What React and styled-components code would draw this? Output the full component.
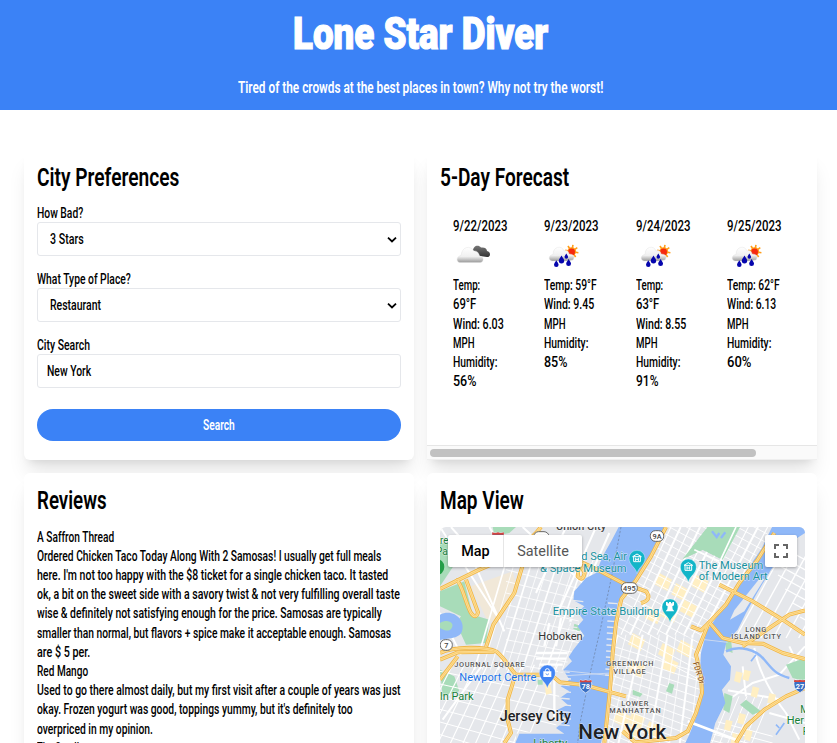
import React, { useLayoutEffect, useRef, useState } from "react";
import styled, { createGlobalStyle } from "styled-components";

const GlobalStyle = createGlobalStyle`
  * { box-sizing: border-box; }
  html, body { margin: 0; padding: 0; background: #fff; overflow: hidden; }
  body { font-family: Roboto, "Liberation Sans", sans-serif; font-size: 14.4px; font-weight: 500; color: #000; }
  h1, h2, p { margin: 0; font-weight: inherit; }
`;

const FitBox = styled.span`
  display: block;
  flex: none;
  width: ${(p) => p.$w}px;
  white-space: pre;
`;

const FitInner = styled.span`
  display: inline-block;
  transform-origin: 0 50%;
`;

/* Condenses a single line of text to the given width. */
function Fit({ w, children }) {
  const ref = useRef(null);
  const [scale, setScale] = useState(1);
  useLayoutEffect(() => {
    setScale(w / ref.current.offsetWidth);
  }, [w]);
  return (
    <FitBox $w={w}>
      <FitInner ref={ref} style={{ transform: `scaleX(${scale})` }}>
        {children}
      </FitInner>
    </FitBox>
  );
}

const Page = styled.div`
  height: 743px;
  overflow: hidden;
`;

const Header = styled.header`
  height: 110px;
  padding-left: 4px;
  background: #3b82f6;
  color: #fff;
  display: flex;
  flex-direction: column;
  align-items: center;
`;

const Title = styled.h1`
  padding-top: 9px;
  font-size: 43.5px;
  line-height: 52px;
  font-weight: 900;
  -webkit-text-stroke: 1.2px #fff;
`;

const Tagline = styled.p`
  padding-top: 17px;
  font-size: 16px;
  line-height: 20px;
  font-weight: 600;
`;

const Grid = styled.main`
  display: grid;
  grid-template-columns: 390px 390px;
  grid-template-rows: 310px 400px;
  gap: 13px;
  padding: 40px 0 0 24px;
`;

const Card = styled.section`
  display: flex;
  flex-direction: column;
  padding: 12px 13px 0;
  background: #fff;
  border-radius: ${(p) => (p.$square ? "6px 6px 0 0" : "6px")};
  box-shadow: 0 16px 20px -4px rgba(0, 0, 0, 0.1), 0 6px 8px -5px rgba(0, 0, 0, 0.1);
`;

const Heading = styled.h2`
  height: 32px;
  font-size: 26.5px;
  line-height: 30px;
  font-weight: 600;
`;

const Label = styled.label`
  display: block;
  height: 19px;
  line-height: 21px;
  margin-top: ${(p) => (p.$first ? 9 : 13)}px;
`;

const Control = styled.div`
  height: 34px;
  border: 1px solid #e5e7eb;
  border-radius: 3px;
  padding: 1px 3px 0 ${(p) => (p.$select ? 12 : 9)}px;
  display: flex;
  align-items: center;
  justify-content: space-between;
`;

const SearchButton = styled.button`
  margin-top: 21px;
  height: 32px;
  border: 0;
  border-radius: 16px;
  background: #3b82f6;
  color: #fff;
  font: 600 14px Roboto, sans-serif;
  display: flex;
  align-items: center;
  justify-content: center;
`;

const Days = styled.div`
  display: flex;
  gap: 12.5px;
  padding: 23px 0 0 12.5px;
  height: 251px;
`;

const Day = styled.div`
  width: 79px;
  flex: none;
  line-height: 19.2px;
`;

const DayIcon = styled.svg`
  display: block;
  width: 40px;
  height: 40px;
`;

const ScrollTrack = styled.div`
  margin: 0 -13px;
  height: 15px;
  flex: none;
  border-top: 1px solid #e6e6e6;
  border-bottom: 1px solid #efefef;
  background: #fafafa;
  padding: 3px;
`;

const ScrollThumb = styled.div`
  width: 326px;
  height: 8px;
  border-radius: 4px;
  background: #c1c1c1;
`;

const ReviewList = styled.div`
  padding-top: 10.600px;
  line-height: 19.2px;
`;

const MapFrame = styled.div`
  position: relative;
  margin-top: 10px;
  width: 365px;
  height: 216px;
  border-radius: 6px 6px 0 0;
  overflow: hidden;
`;

const MapSvg = styled.svg`
  display: block;
  width: 365px;
  height: 216px;
`;

const MapTypes = styled.div`
  position: absolute;
  left: 8px;
  top: 8px;
  display: flex;
  height: 32px;
  background: #fff;
  border-radius: 2px;
  box-shadow: 0 1px 3px rgba(0, 0, 0, 0.3);
`;

const MapType = styled.div`
  width: ${(p) => (p.$active ? 55 : 79)}px;
  display: flex;
  align-items: center;
  justify-content: center;
  font-size: 14.4px;
  font-weight: ${(p) => (p.$active ? 500 : 400)};
  color: ${(p) => (p.$active ? "#000" : "#565656")};
  border-left: ${(p) => (p.$active ? "0" : "1px solid #e6e6e6")};
`;

const Fullscreen = styled.div`
  position: absolute;
  right: 8px;
  top: 8px;
  width: 32px;
  height: 32px;
  background: #fff;
  border-radius: 2px;
  box-shadow: 0 1px 3px rgba(0, 0, 0, 0.3);
  display: flex;
  align-items: center;
  justify-content: center;
`;

const HiddenDefs = styled.svg`
  display: block;
  width: 0;
  height: 0;
`;

const Chevron = () => (
  <svg width="10" height="8" viewBox="0 0 10 8">
    <path d="M1 1.600 L5 5.400 L9 1.600" fill="none" stroke="#000" strokeWidth="1.800" />
  </svg>
);

const WeatherDefs = () => (
  <HiddenDefs>
    <defs>
      <linearGradient id="cloudFill" x1="0" y1="0" x2="0" y2="1">
        <stop offset="0" stopColor="#fff" />
        <stop offset=".6" stopColor="#f0f0f0" />
        <stop offset="1" stopColor="#999" />
      </linearGradient>
      <linearGradient id="darkFill" x1="0" y1="0" x2="0" y2="1">
        <stop offset="0" stopColor="#777" />
        <stop offset="1" stopColor="#333" />
      </linearGradient>
    </defs>
  </HiddenDefs>
);

const Cloudy = () => (
  <DayIcon viewBox="0 0 40 40">
    <path d="M20 17 C19 10 25 8 28 11.500 C32 11 34 13 34 15 C38 16 38 21 34 21 L27 20 Z" fill="url(#darkFill)" />
    <path d="M7 26.500 C3 26 3 20.500 8 19.500 C9 10.500 17 9 21 15 C24 14.500 26 17 26.500 20 C31.500 21 31 26 27 26.500 Z" fill="url(#cloudFill)" stroke="#ddd" strokeWidth=".4" />
  </DayIcon>
);

const Drop = ({ x, y, s = 1 }) => (
  <path transform={`translate(${x} ${y}) scale(${s})`} d="M0 -4 C1 -2 2.700 -.4 2.700 1.200 A2.700 2.700 0 0 1 -2.700 1.200 C-2.700 -.4 -1 -2 0 -4Z" fill="#0505ad" />
);

const Rainy = () => (
  <DayIcon viewBox="0 0 40 40">
    <g stroke="#ff9d19" strokeWidth="1.600">
      {[0, 45, 90, 135, 180, 225, 270, 315].map((a) => (
        <path key={a} d="M27.800 8.800 V13" transform={`rotate(${a + 10} 27.800 15.500)`} />
      ))}
    </g>
    <circle cx="27.800" cy="15.500" r="4.300" fill="#ff9d19" />
    <circle cx="27.600" cy="16" r="3.400" fill="#f52a10" />
    <path d="M8 25 C4 24 4.500 19 9 18.500 C9 10 18 9 20 15 C23 13.500 25 16 25 18 C30 18 31 21 29 24 L22 25 Z" fill="url(#cloudFill)" stroke="#ddd" strokeWidth=".4" />
    <Drop x={17.5} y={23.5} />
    <Drop x={22.3} y={20.2} s={0.65} />
    <Drop x={12.3} y={27.7} s={0.85} />
    <Drop x={24.6} y={26.6} s={0.9} />
  </DayIcon>
);

const days = [
  { date: "9/22/2023", icon: Cloudy, lines: [["Temp:", 27], ["69°F", 23.5], ["Wind: 6.03", 50.5], ["MPH", 21.5], ["Humidity:", 44.5], ["56%", 23.5]] },
  { date: "9/23/2023", icon: Rainy, lines: [["Temp: 59°F", 53], ["Wind: 9.45", 50], ["MPH", 21.5], ["Humidity:", 44.5], ["85%", 23.5]] },
  { date: "9/24/2023", icon: Rainy, lines: [["Temp:", 27], ["63°F", 23.5], ["Wind: 8.55", 50], ["MPH", 21.5], ["Humidity:", 44.5], ["91%", 22.5]] },
  { date: "9/25/2023", icon: Rainy, lines: [["Temp: 62°F", 53], ["Wind: 6.13", 49], ["MPH", 21.5], ["Humidity:", 44.5], ["60%", 24.5]] },
];

const reviews = [
  ["A Saffron Thread", 77],
  ["Ordered Chicken Taco Today Along With 2 Samosas! I usually get full meals", 344.5],
  ["here. I'm not too happy with the $8 ticket for a single chicken taco. It tasted", 351.5],
  ["ok, a bit on the sweet side with a savory twist & not very fulfilling overall taste", 363],
  ["wise & definitely not satisfying enough for the price. Samosas are typically", 344.5],
  ["smaller than normal, but flavors + spice make it acceptable enough. Samosas", 354.5],
  ["are $ 5 per.", 53],
  ["Red Mango", 51],
  ["Used to go there almost daily, but my first visit after a couple of years was just", 363.5],
  ["okay. Frozen yogurt was good, toppings yummy, but it's definitely too", 315.5],
  ["overpriced in my opinion.", 116],
  ["The Smalls", 47],
];

const range = (n) => Array.from({ length: n }, (_, i) => i);

const HUDSON = "M548 12 L528 50 L500 100 L480 150 L450 165 L415 205 L412 232 L445 250 L425 268 L442 290 L425 310 L445 338 L412 380 L398 402 L408 415 L382 440 L400 470 L374 490 L400 505 L372 525 L395 545 L365 560 L390 590 L360 615 L385 632 L250 632 L238 660 H495 L515 560 L523 440 L535 330 L545 240 L600 170 L692 12Z";
const EAST = "M1008 12 L978 75 L920 160 L880 220 L840 285 L812 325 L795 390 L792 440 L804 500 L785 570 L762 630 L748 660 H822 L838 600 L868 540 L858 500 L882 470 L885 430 L862 395 L872 355 L905 320 L930 270 L960 215 L1005 140 L1060 60 L1107 30 V12Z";
const MANHATTAN = "M692 12 H1008 L978 75 L880 220 L812 325 L795 390 L804 500 L762 630 L748 660 H495 L515 560 L535 330 L545 240 L600 170Z";
const HIGHWAYS = [
  "M690 12 L645 100 L598 175 L556 228 L540 300 L530 390 L522 500 L505 660",
  "M12 198 L130 140 L235 95 L300 30 L315 12",
  "M315 25 L262 120 L235 210 L172 305 L150 372",
  "M12 390 C50 370 150 370 182 386 C210 410 225 440 240 455 L345 455 L372 478 L445 486 L540 512 L570 520",
  "M12 410 L65 388 L175 386",
  "M240 450 L215 530 L215 590 L225 630 L205 660",
  "M60 172 C75 172 90 245 105 270 Q120 290 126 268 L90 170",
  "M12 470 L65 400",
  "M400 100 L480 138 L560 180 L630 205 Q650 230 615 240",
  "M430 120 L425 160 Q440 178 446 150 L430 120",
  "M1015 30 L965 110 L910 180 L870 245 L818 300 L800 345 L780 395 L795 460 L798 510 L780 570 L755 625 L720 645 L600 658",
  "M850 185 L950 235 L1040 290 L1107 335",
  "M765 310 L795 322 L820 298 L860 345 L920 360 L980 362 L1040 390 L1107 408",
  "M920 370 L985 325 L1060 275 L1107 262",
  "M1107 495 L1050 520 L985 560 L930 610 L900 660",
  "M560 625 L600 660",
];
const PARKS = [
  "M815 12 H912 L860 110 L800 80 L740 108Z",
  "M12 60 H45 L55 125 L12 190Z",
  "M12 205 L85 175 L110 275 L160 290 L150 360 L90 365 L60 300 L75 280 L12 250Z",
  "M12 440 L55 460 L70 505 L20 520Z",
  "M170 12 H240 L220 30 L175 38Z",
  "M865 510 L890 520 L880 570 L862 560Z",
  "M912 545 L930 530 L975 565 L950 575Z",
  "M1050 425 L1107 405 V475 L1070 465Z",
  "M868 355 L885 350 L890 390 L870 382Z",
  "M1040 12 L1075 12 L1060 35Z",
  "M700 480 L715 485 L708 512 L690 505Z",
  "M590 500 L620 512 L612 522 L590 515Z",
  "M415 302 L440 312 L430 325 L412 318Z",
  "M305 470 H320 V485 H305Z",
  "M290 650 L375 640 V660 H290Z",
];

const Pin = ({ x, y, color, children }) => (
  <g transform={`translate(${x} ${y})`}>
    <path d="M0 46 C-3 28 -24 20 -24 0 A24 24 0 0 1 24 0 C24 20 3 28 0 46Z" fill={color} stroke="#fff" strokeOpacity=".5" strokeWidth="2" />
    {children}
  </g>
);

const MuseumGlyph = () => (
  <g fill="none" stroke="#fff" strokeWidth="3">
    <path d="M-13 -5 L0 -13 L13 -5Z M-10 -4 V10 H10 V-4 M-4 -2 V8 M4 -2 V8 M-4 3 H4" />
  </g>
);

const Shield = ({ x, y, w, children }) => (
  <g>
    <rect x={x - w / 2} y={y - 16} width={w} height="32" rx="15" fill="#fff" stroke="#666" strokeWidth="3" />
    <text x={x} y={y + 8} textAnchor="middle" fontSize="22" fontWeight="500" fill="#444">{children}</text>
  </g>
);

const Interstate = ({ x, y, children }) => (
  <g transform={`translate(${x} ${y})`}>
    <path d="M-16 -18 Q-8 -14 0 -18 Q8 -14 16 -18 Q25 8 0 21 Q-25 8 -16 -18Z" fill="#3a6fc4" stroke="#fff" strokeWidth="2" />
    <path d="M-17 -18 Q-8 -14 0 -18 Q8 -14 17 -18 L18 -11 H-18Z" fill="#d9453d" />
    <text y="10" textAnchor="middle" fontSize="22" fontWeight="700" fill="#fff">{children}</text>
  </g>
);

const labels = [
  ["Union City", 360, 20, 150, 30, "#444", 500],
  ["d Sea, Air", 436, 112, 137, 32, "#17919f", 400],
  ["& Space Museum", 312, 147, 260, 32, "#17919f", 400],
  ["The Museum", 788, 138, 194, 32, "#17919f", 400],
  ["of Modern Art", 788, 171, 207, 32, "#17919f", 400],
  ["Empire State Building", 350, 276, 320, 33, "#17919f", 400],
  ["Hoboken", 307, 350, 133, 34, "#333", 400],
  ["Newport Centre", 70, 473, 231, 33, "#1a73e8", 400],
  ["JOURNAL SQUARE", 55, 433, 211, 22, "#555", 500],
  ["GREENWICH", 511, 430, 141, 22, "#555", 500],
  ["VILLAGE", 532, 452, 97, 22, "#555", 500],
  ["LOWER", 556, 548, 81, 22, "#555", 500],
  ["MANHATTAN", 520, 570, 154, 22, "#555", 500],
  ["LONG", 928, 327, 63, 22, "#555", 500],
  ["ISLAND CITY", 886, 348, 149, 22, "#555", 500],
  ["Jersey City", 191, 594, 214, 43, "#202124", 500],
  ["New York", 427, 649, 264, 63, "#202124", 500],
  ["ln Park", 12, 530, 101, 33, "#188038", 400],
  ["re", 12, 63, 25, 31, "#188038", 400],
  ["Par", 0, 95, 46, 31, "#188038", 400],
  ["M", 1093, 570, 26, 31, "#188038", 400],
  ["Her", 1052, 602, 52, 31, "#188038", 400],
  ["P", 1100, 637, 18, 31, "#188038", 400],
  ["Liberty", 292, 673, 102, 33, "#188038", 400],
];

function CityMap() {
  return (
    <MapSvg viewBox="12 12 1095 648" fontFamily="Roboto, sans-serif">
      <defs>
        <clipPath id="manhattan"><path d={MANHATTAN} /></clipPath>
        <clipPath id="jersey"><path d="M12 12 H548 L480 150 L412 232 L440 338 L382 440 L374 490 L365 560 L360 620 L240 632 V660 H12Z" /></clipPath>
        <clipPath id="queens"><path d="M1107 30 L1060 60 L960 215 L870 360 L882 470 L868 540 L822 660 H1107Z" /></clipPath>
      </defs>
      <path d="M0 0 H1110 V670 H0Z" fill="#e5e7eb" />
      <path d="M105 190 L230 145 L245 205 L175 300 L150 285Z" fill="#f1e8d8" />
      {PARKS.slice(0, 5).map((d) => <path key={d} d={d} fill="#a8dcb9" />)}
      <g clipPath="url(#jersey)" stroke="#fff" fill="none">
        {range(15).map((i) => <path key={i} d={`M${215 + i * 26} 100 L${115 + i * 24} 440`} strokeWidth={i % 3 ? 2.5 : 5} />)}
        {range(9).map((i) => <path key={i} d={`M210 ${140 + i * 35} L460 ${205 + i * 32}`} strokeWidth="2.500" />)}
        {range(10).map((i) => <path key={i} d={`M${50 + i * 35} 425 L${-80 + i * 38} 680`} strokeWidth="3.500" />)}
        {range(7).map((i) => <path key={i} d={`M12 ${445 + i * 38} L370 ${520 + i * 44}`} strokeWidth="3" />)}
        <path d="M110 110 L205 325 M12 12 L190 290 M45 12 L150 130 M160 12 L230 130 M260 12 L440 180 M390 12 L300 210 M480 12 L370 260 M520 30 L400 300 M12 270 L75 395 M140 425 L20 590" strokeWidth="6" />
        <path d="M300 390 H395 M300 407 H390 M310 425 H380 M355 440 V590 M325 370 L340 300 M360 370 L375 285" strokeWidth="7" />
      </g>
      <g clipPath="url(#manhattan)" fill="none">
        {[[670, 150], [720, 180], [780, 155], [690, 245], [745, 230], [640, 250], [590, 330], [680, 360], [590, 410], [735, 350], [545, 560], [590, 565], [640, 595], [690, 400], [570, 600]].map(([x, y], i) => (
          <path key={i} d={`M${x} ${y} l38 20 l-14 34 l-38 -20Z`} fill="#ffefc3" />
        ))}
        <g stroke="#fff" strokeWidth="2.800">
          {range(25).map((i) => <path key={i} d={`M${530 + i * 8} ${330 - i * 23} l350 188`} />)}
          {range(12).map((i) => <path key={i} d={`M${705 + i * 29} 12 L${555 + i * 27} 335`} strokeWidth={i % 2 ? 6 : 3.5} />)}
          {range(14).map((i) => <path key={i} d={`M515 ${365 + i * 22} l310 ${95 + i * 3}`} />)}
          {range(12).map((i) => <path key={i} d={`M${545 + i * 25} 335 L${450 + i * 31} 680`} strokeWidth={i % 3 ? 2.5 : 6} />)}
        </g>
        <path d={PARKS[0]} fill="#a8dcb9" />
        <path d="M828 25 L842 42 L850 30 M855 45 L868 28" stroke="#8fb8f8" strokeWidth="7" />
        <path d="M900 12 L853 112 M775 80 L850 115" stroke="#fff" strokeWidth="5" />
      </g>
      <g clipPath="url(#queens)" stroke="#fff" fill="none">
        {range(10).map((i) => <path key={i} d={`M${960 + i * 22} ${30 + i * 42} l220 120`} strokeWidth="3.500" />)}
        {range(8).map((i) => <path key={i} d={`M${1000 + i * 38} 90 L${860 + i * 38} 345`} strokeWidth="4" />)}
        {range(6).map((i) => <path key={i} d={`M820 ${590 + i * 20} l190 50`} strokeWidth="3" />)}
        {range(6).map((i) => <path key={i} d={`M${885 + i * 24} 520 l-70 170`} strokeWidth="3" />)}
        <path d="M955 375 C965 440 1010 520 1050 570 L1090 650 M885 525 L950 480 L1030 455 L1107 370 M930 520 L920 430 M865 500 L1040 530 M1107 600 L1000 570 M1060 370 L1107 470" strokeWidth="6" />
      </g>
      {[[900, 445], [925, 440], [950, 490], [870, 590], [910, 570], [930, 620], [890, 630], [1000, 510]].map(([x, y]) => (
        <path key={`${x}-${y}`} d={`M${x} ${y} l20 5 l-8 30 l-18 -6Z`} fill="#ffefc3" />
      ))}
      {PARKS.slice(5).map((d) => <path key={d} d={d} fill="#a8dcb9" />)}
      <path d={HUDSON} fill="#8fb8f8" />
      <path d={EAST} fill="#8fb8f8" />
      <path d="M12 275 C50 255 90 290 78 325 C70 350 30 345 12 352Z" fill="#8fb8f8" />
      <path d="M12 300 C35 285 60 300 45 318 C35 330 12 315 12 315Z" fill="#a8dcb9" />
      <path d="M972 165 L985 168 L925 265 L882 290 L895 262Z" fill="#e7e9ed" />
      <path d="M870 385 C910 365 960 380 985 410 C1010 440 1020 455 1060 465" fill="none" stroke="#8fb8f8" strokeWidth="7" />
      <path d="M1020 635 L1045 600 M1030 615 L1020 605 M960 395 L945 415" fill="none" stroke="#8fb8f8" strokeWidth="5" />
      <g stroke="#e7e9ed" strokeWidth="4">
        {range(8).map((i) => <path key={i} d={`M${410 - i * 3} ${232 + i * 13} l32 4`} />)}
        {range(9).map((i) => <path key={i} d={`M${366 + (i % 2) * 4} ${445 + i * 20} l35 3`} />)}
        {range(13).map((i) => <path key={i} d={`M${516 - i * 0.7} ${240 + i * 18} l28 2`} />)}
      </g>
      <path d="M555 12 L525 170 L495 310 L465 440 L432 600 L425 660" fill="none" stroke="#6b7f9f" strokeWidth="2" strokeDasharray="7 5" />
      <path d="M385 443 L525 458 M390 458 L525 450 M720 340 L875 358 M740 595 L890 640" stroke="#e3e7ef" strokeWidth="3" opacity=".7" />
      <path d="M755 595 L900 650" stroke="#fff" strokeWidth="8" />
      <g fill="none" strokeLinejoin="round">
        {HIGHWAYS.map((d) => <path key={d} d={d} stroke="#f0b545" strokeWidth="12" />)}
        {HIGHWAYS.map((d) => <path key={d} d={d} stroke="#ffe19a" strokeWidth="7" />)}
        {HIGHWAYS.map((d) => <path key={d} d={d} stroke="#f3bf58" strokeWidth="1.800" />)}
      </g>
      <path d="M325 480 L340 475 L348 510 L330 515Z" fill="#ffefc3" />
      <g stroke="#fff" strokeWidth="3" strokeOpacity=".65" strokeLinejoin="round" paintOrder="stroke">
        {labels.map(([t, x, y, w, size, fill, weight]) => (
          <text key={`${t}${y}`} x={x} y={y} textLength={w} lengthAdjust={size < 24 ? "spacing" : "spacingAndGlyphs"} fontSize={size} fill={fill} fontWeight={weight}>{t}</text>
        ))}
        <text transform="translate(770 420) rotate(72)" textLength="68" lengthAdjust="spacingAndGlyphs" fontSize="25" fill="#925b21" fontWeight="500">FDR Dr</text>
      </g>
      <Shield x={663} y={39} w={40}>9A</Shield>
      <Shield x={580} y={195} w={48}>495</Shield>
      <Shield x={31} y={366} w={36}>7</Shield>
      <Shield x={316} y={42} w={46}>495</Shield>
      <Interstate x={449} y={489}>78</Interstate>
      <Interstate x={1092} y={488}>27</Interstate>
      <Interstate x={186} y={46} />
      <circle cx="0" cy="132" r="25" fill="#249e48" />
      <Pin x={603} y={106} color="#12b5c8"><MuseumGlyph /></Pin>
      <Pin x={757} y={132} color="#12b5c8"><MuseumGlyph /></Pin>
      <Pin x={702} y={252} color="#12b5c8">
        <path d="M-12 -15 H-7 V-11 H-3 V-15 H3 V-11 H7 V-15 H12 V-5 L7 -2 L8 7 L13 13 H-13 L-8 7 L-7 -2 L-12 -5Z" fill="#fff" />
      </Pin>
      <Pin x={334} y={450} color="#4285f4">
        <path d="M-12 -5 H12 V12 H-12Z" fill="#fff" />
        <path d="M-6 -4 V-7 A6 6 0 0 1 6 -7 V-4" fill="none" stroke="#fff" strokeWidth="3" />
        <path d="M-5 2 Q0 9 5 2" fill="none" stroke="#4285f4" strokeWidth="2.500" />
      </Pin>
    </MapSvg>
  );
}

export default function App() {
  return (
    <Page>
      <GlobalStyle />
      <WeatherDefs />
      <Header>
        <Title><Fit w={255}>Lone Star Diver</Fit></Title>
        <Tagline><Fit w={365}>Tired of the crowds at the best places in town? Why not try the worst!</Fit></Tagline>
      </Header>
      <Grid>
        <Card>
          <Heading><Fit w={142.5}>City Preferences</Fit></Heading>
          <Label $first><Fit w={46.5}>How Bad?</Fit></Label>
          <Control $select><Fit w={34}>3 Stars</Fit><Chevron /></Control>
          <Label><Fit w={94}>What Type of Place?</Fit></Label>
          <Control $select><Fit w={51}>Restaurant</Fit><Chevron /></Control>
          <Label><Fit w={53}>City Search</Fit></Label>
          <Control><Fit w={44}>New York</Fit></Control>
          <SearchButton><Fit w={32}>Search</Fit></SearchButton>
        </Card>
        <Card $square>
          <Heading><Fit w={129}>5-Day Forecast</Fit></Heading>
          <Days>
            {days.map(({ date, icon: Icon, lines }) => (
              <Day key={date}>
                <Fit w={54}>{date}</Fit>
                <Icon />
                {lines.map(([text, w]) => <Fit key={text} w={w}>{text}</Fit>)}
              </Day>
            ))}
          </Days>
          <ScrollTrack><ScrollThumb /></ScrollTrack>
        </Card>
        <Card>
          <Heading><Fit w={70}>Reviews</Fit></Heading>
          <ReviewList>
            {reviews.map(([text, w]) => <Fit key={text} w={w}>{text}</Fit>)}
          </ReviewList>
        </Card>
        <Card>
          <Heading><Fit w={84}>Map View</Fit></Heading>
          <MapFrame>
            <CityMap />
            <MapTypes>
              <MapType $active>Map</MapType>
              <MapType>Satellite</MapType>
            </MapTypes>
            <Fullscreen>
              <svg width="14" height="14" viewBox="0 0 14 14">
                <path d="M1 5 V1 H5 M9 1 H13 V5 M13 9 V13 H9 M5 13 H1 V9" fill="none" stroke="#666" strokeWidth="2" />
              </svg>
            </Fullscreen>
          </MapFrame>
        </Card>
      </Grid>
    </Page>
  );
}
